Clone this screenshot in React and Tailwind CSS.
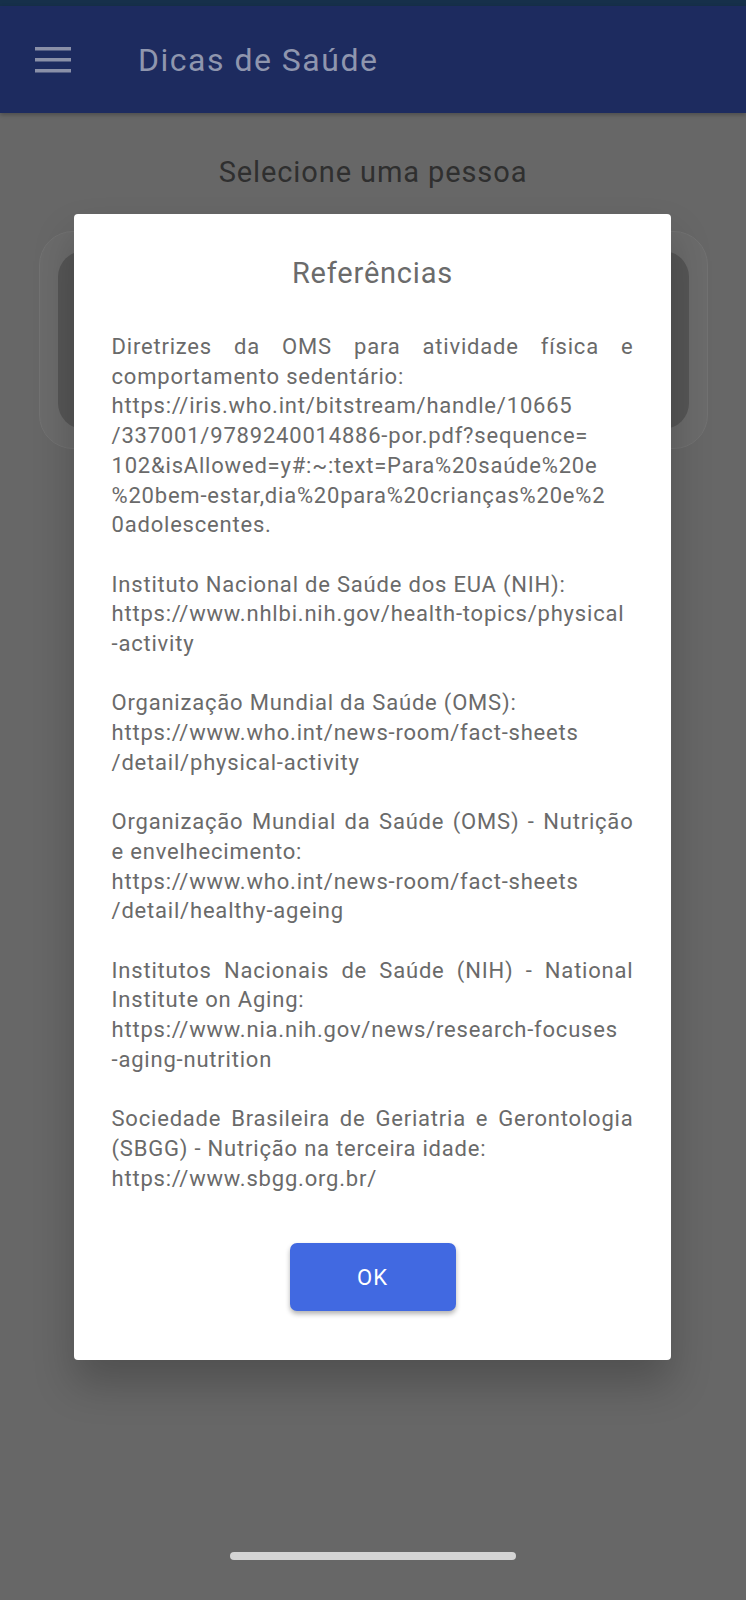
import React from "react";

const refs = [
  [
    { t: "Diretrizes da OMS para atividade física e", j: true },
    { t: "comportamento sedentário:" },
    { t: "https://iris.who.int/bitstream/handle/10665" },
    { t: "/337001/9789240014886-por.pdf?sequence=" },
    { t: "102&isAllowed=y#:~:text=Para%20saúde%20e" },
    { t: "%20bem-estar,dia%20para%20crianças%20e%2" },
    { t: "0adolescentes." },
  ],
  [
    { t: "Instituto Nacional de Saúde dos EUA (NIH):" },
    { t: "https://www.nhlbi.nih.gov/health-topics/physical" },
    { t: "-activity" },
  ],
  [
    { t: "Organização Mundial da Saúde (OMS):" },
    { t: "https://www.who.int/news-room/fact-sheets" },
    { t: "/detail/physical-activity" },
  ],
  [
    { t: "Organização Mundial da Saúde (OMS) - Nutrição", j: true },
    { t: "e envelhecimento:" },
    { t: "https://www.who.int/news-room/fact-sheets" },
    { t: "/detail/healthy-ageing" },
  ],
  [
    { t: "Institutos Nacionais de Saúde (NIH) - National", j: true },
    { t: "Institute on Aging:" },
    { t: "https://www.nia.nih.gov/news/research-focuses" },
    { t: "-aging-nutrition" },
  ],
  [
    { t: "Sociedade Brasileira de Geriatria e Gerontologia", j: true },
    { t: "(SBGG) - Nutrição na terceira idade:" },
    { t: "https://www.sbgg.org.br/" },
  ],
];

export default function App() {
  return (
    <div
      className="relative w-[746px] h-[1600px] overflow-hidden bg-[#676767]"
      style={{ fontFamily: "Roboto, 'Noto Sans', sans-serif" }}
    >
      {/* status bar */}
      <div className="h-[6px] bg-[#16304a]" />

      {/* header */}
      <header className="h-[107px] bg-[#1d2b5f] flex items-center shadow-[0_2px_4px_rgba(0,0,0,0.25)]">
        <div className="w-[138px] pl-[35px]">
          <svg width="36" height="26" viewBox="0 0 36 26">
            <rect x="0" y="0" width="36" height="3.5" fill="#8a90a8" />
            <rect x="0" y="11" width="36" height="3.5" fill="#8a90a8" />
            <rect x="0" y="22" width="36" height="3.5" fill="#8a90a8" />
          </svg>
        </div>
        <h1 className="text-[32px] tracking-[1.5px] text-[#8f96ae]">Dicas de Saúde</h1>
      </header>

      {/* page content */}
      <div className="flex flex-col items-center">
        <h2 className="mt-[42px] text-[29px] leading-[34px] tracking-[0.9px] text-[#2f2f2f]">Selecione uma pessoa</h2>
        <div className="mt-[42px] w-[669px] h-[218px] rounded-[34px] bg-[#6b6b6b] border border-[#727272] flex items-center justify-center">
          <div className="w-[631px] h-[178px] rounded-[26px] bg-[#565656]" />
        </div>
      </div>

      {/* dialog */}
      <div className="absolute left-[74px] top-[214px] w-[597px] h-[1146px] bg-white rounded-[4px] shadow-[0_24px_40px_rgba(0,0,0,0.22)] flex flex-col items-center pt-[39px]">
        <h3 className="text-[29px] leading-[40px] tracking-[0.8px] text-[#6b6b6b]">Referências</h3>
        <div className="mt-[39px] w-[522px] text-[22px] leading-[29.7px] tracking-[0.8px] text-[#6a6a6a]">
          {refs.map((p, i) => (
            <div key={i} className={i > 0 ? "mt-[29.7px]" : ""}>
              {p.map((l, k) => (
                <div
                  key={k}
                  className={
                    "whitespace-nowrap " +
                    (l.j ? "text-justify [text-align-last:justify]" : "")
                  }
                >
                  {l.t}
                </div>
              ))}
            </div>
          ))}
        </div>
        <button className="mt-[50px] w-[166px] h-[68px] rounded-[7px] bg-[#4169e1] text-white text-[22px] tracking-[1px] shadow-[0_3px_5px_rgba(0,0,0,0.3)]">
          OK
        </button>
      </div>

      {/* gesture bar */}
      <div className="absolute left-[230px] top-[1552px] w-[286px] h-[8px] rounded-full bg-[#d4d4d4]" />
    </div>
  );
}
